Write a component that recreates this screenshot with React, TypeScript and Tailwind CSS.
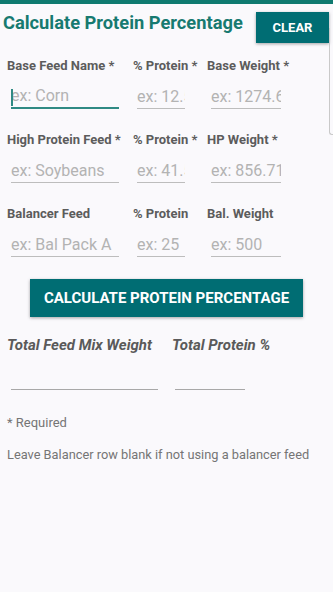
import React from 'react';

type Field = { placeholder: string; width: string };
type Row = { labels: [string, string, string]; fields: [Field, Field, Field] };

const rows: Row[] = [
  {
    labels: ['Base Feed Name *', '% Protein *', 'Base Weight *'],
    fields: [
      { placeholder: 'ex: Corn', width: 'w-[108px]' },
      { placeholder: 'ex: 12.5', width: 'w-[48px]' },
      { placeholder: 'ex: 1274.6', width: 'w-[70px]' }
    ]
  },
  {
    labels: ['High Protein Feed *', '% Protein *', 'HP Weight *'],
    fields: [
      { placeholder: 'ex: Soybeans', width: 'w-[108px]' },
      { placeholder: 'ex: 41.5', width: 'w-[48px]' },
      { placeholder: 'ex: 856.71', width: 'w-[70px]' }
    ]
  },
  {
    labels: ['Balancer Feed', '% Protein', 'Bal. Weight'],
    fields: [
      { placeholder: 'ex: Bal Pack A', width: 'w-[108px]' },
      { placeholder: 'ex: 25', width: 'w-[48px]' },
      { placeholder: 'ex: 500', width: 'w-[70px]' }
    ]
  }
];

const colClasses = ['w-[126px]', 'w-[74px]', 'flex-1'];

const App = () => {
  return <div className="relative w-[333px] h-[592px] overflow-hidden bg-[#faf9fc] font-['Roboto',sans-serif]">
      {/* top bar */}
      <div className="h-[4px] bg-[#0f7a70]" />
      {/* header */}
      <div className="flex items-start justify-between h-[40px] pl-[3px] pr-[4px]">
        <h1 className="mt-[7px] text-[18.3px] leading-[24px] font-bold text-[#177a70]">
          Calculate Protein Percentage
        </h1>
        <button className="mt-[8px] w-[73px] h-[31px] bg-[#006d73] text-white text-[13px] font-bold shadow-[0_1px_3px_rgba(0,0,0,0.35)]">
          CLEAR
        </button>
      </div>
      {/* scroll thumb */}
      <div className="absolute left-[329px] top-[28px] w-[4px] h-[107px] border-l border-b border-[#c9c9c9] rounded-bl-[3px]" />
      {/* form rows */}
      <div className="mt-[14px] pl-[7px]">
        {rows.map((row, ri) => <div key={ri} className="flex h-[74px]">
            {row.labels.map((label, ci) => <div key={ci} className={colClasses[ci]}>
                <div className="text-[13px] leading-[16px] font-bold text-[#5c5c5c] whitespace-nowrap">
                  {label}
                </div>
                <div className="relative mt-[10px] ml-[4px]">
                  {ri === 0 && ci === 0 && <div className="absolute left-0 top-[5px] w-[1.5px] h-[17px] bg-[#2f8a84]" />}
                  <input readOnly placeholder={row.fields[ci].placeholder} className={`${row.fields[ci].width} h-[25px] bg-transparent text-[16px] outline-none placeholder:text-[#b3b3b3] ${ri === 0 && ci === 0 ? 'border-b-2 border-[#2f8a84]' : 'border-b-[1.5px] border-[#bdbdbd]'}`} />
                </div>
              </div>)}
          </div>)}
      </div>
      {/* calculate button */}
      <div className="mt-[-1px] pl-[30px]">
        <button className="w-[273px] h-[38px] bg-[#006d73] text-white text-[15px] font-bold shadow-[0_1px_3px_rgba(0,0,0,0.35)]">
          CALCULATE PROTEIN PERCENTAGE
        </button>
      </div>
      {/* totals */}
      <div className="flex mt-[20px] pl-[7px]">
        <div className="w-[165px]">
          <div className="text-[15px] leading-[16px] font-bold italic text-[#5a5a5a] whitespace-nowrap">Total Feed Mix Weight</div>
          <div className="mt-[36px] ml-[4px] w-[147px] border-b-[1.5px] border-[#a8a8a8]" />
        </div>
        <div>
          <div className="text-[15px] leading-[16px] font-bold italic text-[#5a5a5a] whitespace-nowrap">Total Protein %</div>
          <div className="mt-[36px] ml-[3px] w-[70px] border-b-[1.5px] border-[#a8a8a8]" />
        </div>
      </div>
      <p className="mt-[25px] pl-[7px] text-[13px] leading-[16px] text-[#757575]">* Required</p>
      <p className="mt-[16px] pl-[7px] text-[12.8px] leading-[16px] text-[#757575] whitespace-nowrap">
        Leave Balancer row blank if not using a balancer feed
      </p>
    </div>;
};

export default App;
